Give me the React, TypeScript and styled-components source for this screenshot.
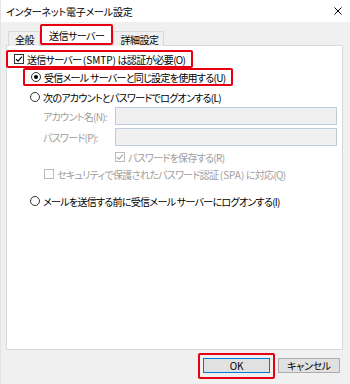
import React from 'react';
import styled, { createGlobalStyle, css } from 'styled-components';

const GlobalStyle = createGlobalStyle`
  html, body {
    margin: 0;
    padding: 0;
    background: #f0f0f0;
  }
  body {
    font-family: "Noto Sans CJK JP", "Noto Sans", sans-serif;
    font-feature-settings: "palt";
    font-size: 10px;
    letter-spacing: -0.7px;
    color: #000;
  }
`;

const Window = styled.div`
  display: flex;
  flex-direction: column;
  width: 350px;
  height: 384px;
  box-sizing: border-box;
  border-left: 1px solid #e4e4e4;
  background: #f0f0f0;
`;

const TitleBar = styled.div`
  display: flex;
  align-items: center;
  justify-content: space-between;
  height: 22px;
  padding: 0 8px 0 5px;
  background: #fff;
  letter-spacing: -0.2px;
`;

const Close = styled.svg`
  width: 8px;
  height: 8px;
  stroke: #000;
  stroke-width: 1;
`;

const Body = styled.div`
  display: flex;
  flex-direction: column;
  flex: 1;
  padding: 3px 7px 0 5px;
`;

const TabStrip = styled.div`
  display: flex;
  align-items: flex-end;
  padding-left: 2px;
  height: 21px;
  position: relative;
  z-index: 1;
`;

const Tab = styled.div<{ $active?: boolean }>`
  display: flex;
  align-items: center;
  height: 15px;
  padding: 0 5px 0 6px;
  box-sizing: border-box;
  border: 1px solid #d9d9d9;
  border-bottom: none;
  background: #f0f0f0;
  letter-spacing: -0.5px;
  white-space: nowrap;

  ${p => p.$active && css`
    height: 17px;
    padding: 0 6px;
    background: #fff;
    border-color: #fff;
  `}
`;

const Mark = styled.div<{ $pad?: string }>`
  display: flex;
  align-items: center;
  width: fit-content;
  box-sizing: border-box;
  border: 2px solid #e60012;
  border-radius: 2px;
  padding: ${p => p.$pad ?? '0'};
`;

const Panel = styled.div`
  display: flex;
  flex-direction: column;
  height: 305px;
  box-sizing: border-box;
  margin-top: -1px;
  padding-top: 4px;
  background: #fff;
  border: 1px solid #d9d9d9;
`;

const Option = styled.label<{ $indent?: number; $disabled?: boolean; $h?: number }>`
  display: flex;
  align-items: center;
  gap: 3px;
  height: ${p => p.$h ?? 18}px;
  padding-left: ${p => p.$indent ?? 0}px;
  color: ${p => (p.$disabled ? '#9d9d9d' : '#000')};
  white-space: nowrap;
`;

const Radio = styled.span<{ $on?: boolean }>`
  display: flex;
  align-items: center;
  justify-content: center;
  width: 10px;
  height: 10px;
  box-sizing: border-box;
  border: 1px solid #333;
  border-radius: 50%;
  background: #fff;
  flex-shrink: 0;

  &::after {
    content: '';
    width: 4px;
    height: 4px;
    border-radius: 50%;
    background: ${p => (p.$on ? '#000' : 'transparent')};
  }
`;

const Box = styled.span<{ $disabled?: boolean }>`
  display: flex;
  align-items: center;
  justify-content: center;
  width: 10px;
  height: 10px;
  box-sizing: border-box;
  border: 1px solid ${p => (p.$disabled ? '#bcbcbc' : '#333')};
  background: #fff;
  flex-shrink: 0;

  svg {
    width: 8px;
    height: 8px;
    fill: none;
    stroke: ${p => (p.$disabled ? '#a8a8a8' : '#000')};
    stroke-width: 1.2;
  }
`;

const Latin = styled.span`
  letter-spacing: 0;
`;

const Field = styled.div`
  display: flex;
  align-items: center;
  height: 18px;
  padding: 0 5px 0 36px;
  color: #9d9d9d;
`;

const FieldLabel = styled.span`
  width: 72px;
  white-space: nowrap;
`;

const Input = styled.div`
  flex: 1;
  height: 18px;
  box-sizing: border-box;
  border: 1px solid #bfccdb;
  background: #f0f0f0;
`;

const Footer = styled.div`
  display: flex;
  justify-content: flex-end;
  align-items: flex-start;
  gap: 3px;
  padding: 3px 3px 0 0;
`;

const Button = styled.div<{ $default?: boolean }>`
  display: flex;
  align-items: center;
  justify-content: center;
  height: 15px;
  box-sizing: border-box;
  width: ${p => (p.$default ? 67 : 62)}px;
  background: #e1e1e1;
  border: 1px solid ${p => (p.$default ? '#0078d7' : '#adadad')};
  letter-spacing: -0.3px;
`;

const Check = ({ on, disabled }: { on?: boolean; disabled?: boolean }) => (
  <Box $disabled={disabled}>
    {on && (
      <svg viewBox="0 0 8 8">
        <path d="M1 4.2 L3 6.2 L7 1.6" />
      </svg>
    )}
  </Box>
);

export default function App() {
  return (
    <>
      <GlobalStyle />
      <Window>
        <TitleBar>
          <span>インターネット電子メール設定</span>
          <Close viewBox="0 0 8 8">
            <path d="M0.5 0.5 L7.5 7.5 M7.5 0.5 L0.5 7.5" />
          </Close>
        </TitleBar>
        <Body>
          <TabStrip>
            <Tab>全般</Tab>
            <Mark style={{ marginBottom: 1 }}>
              <Tab $active>送信サーバー</Tab>
            </Mark>
            <Tab>詳細設定</Tab>
          </TabStrip>
          <Panel>
            <Mark $pad="0 6px" style={{ marginLeft: -1, height: 18 }}>
              <Option $h={14}>
                <Check on />
                <span>
                  送信サーバー <Latin>(SMTP)</Latin> は認証が必要(O)
                </span>
              </Option>
            </Mark>
            <Mark $pad="0 6px" style={{ marginLeft: 16, height: 18 }}>
              <Option $h={14}>
                <Radio $on />
                受信メール サーバーと同じ設定を使用する(U)
              </Option>
            </Mark>
            <Option $indent={23} style={{ marginTop: 2 }}>
              <Radio />
              次のアカウントとパスワードでログオンする(L)
            </Option>
            <Field style={{ marginTop: 1 }}>
              <FieldLabel>アカウント名(N):</FieldLabel>
              <Input />
            </Field>
            <Field style={{ marginTop: 3 }}>
              <FieldLabel>パスワード(P):</FieldLabel>
              <Input />
            </Field>
            <Option $indent={108} $h={16} $disabled style={{ marginTop: 3 }}>
              <Check on disabled />
              パスワードを保存する(R)
            </Option>
            <Option $indent={37} $h={16} $disabled style={{ marginTop: 1 }}>
              <Check disabled />
              <span>
                セキュリティで保護されたパスワード認証 <Latin>(SPA)</Latin> に対応(Q)
              </span>
            </Option>
            <Option $indent={23} style={{ marginTop: 10 }}>
              <Radio />
              メールを送信する前に受信メール サーバーにログオンする(I)
            </Option>
          </Panel>
          <Footer>
            <Mark $pad="3px 3px 4px 3px">
              <Button $default>OK</Button>
            </Mark>
            <Button style={{ marginTop: 5 }}>キャンセル</Button>
          </Footer>
        </Body>
      </Window>
    </>
  );
}
